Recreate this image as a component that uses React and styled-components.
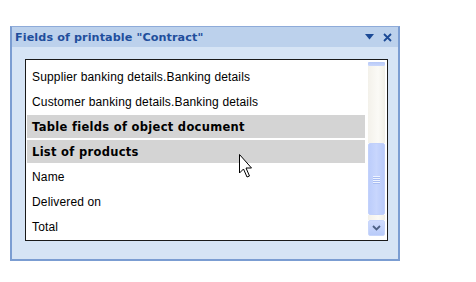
import styled, { createGlobalStyle } from "styled-components";

const GlobalStyle = createGlobalStyle`
  html, body {
    margin: 0;
    padding: 0;
    background: #ffffff;
  }
`;

const Page = styled.div`
  width: 476px;
  height: 282px;
  padding: 26px 0 0 10px;
  box-sizing: border-box;
  position: relative;
`;

const Panel = styled.div`
  width: 390px;
  height: 235px;
  box-sizing: border-box;
  border: 2px solid #7b9dd2;
  border-top: 1px solid #8eabd9;
  background: #d6e4f5;
  display: flex;
  flex-direction: column;
`;

const TitleBar = styled.div`
  height: 21px;
  background: #bcd1ec;
  display: flex;
  align-items: center;
  padding: 0 6px 0 3px;
`;

const Title = styled.div`
  flex: 1;
  font-family: "DejaVu Sans", "Liberation Sans", sans-serif;
  font-weight: bold;
  font-size: 11.2px;
  color: #1f4e9c;
  letter-spacing: 0.1px;
`;

const TitleButtons = styled.div`
  display: flex;
  align-items: center;
  gap: 9px;
`;

const Body = styled.div`
  flex: 1;
  padding: 12px 10px 18px 13px;
  display: flex;
`;

const ListBox = styled.div`
  flex: 1;
  border: 1px solid #1a1a1a;
  background: #ffffff;
  display: flex;
  overflow: hidden;
`;

const Rows = styled.div`
  flex: 1;
  padding: 5px 3px 0 1px;
`;

const Row = styled.div`
  height: 23px;
  margin-bottom: 2px;
  display: flex;
  align-items: center;
  padding: 1px 0 0 5px;
  box-sizing: border-box;
  font-family: ${(p) =>
    p.group ? `"DejaVu Sans", sans-serif` : `"Liberation Sans", Arial, sans-serif`};
  font-size: ${(p) => (p.group ? "11.5px" : "12px")};
  letter-spacing: ${(p) => (p.group ? "0.3px" : "0.15px")};
  font-weight: ${(p) => (p.group ? "bold" : "normal")};
  background: ${(p) => (p.group ? "#d4d4d4" : "transparent")};
  color: #000;
  white-space: nowrap;
`;

const Scroll = styled.div`
  width: 17px;
  margin: 2px 2px 0 0;
  display: flex;
  flex-direction: column;
`;

const TopCap = styled.div`
  height: 4px;
  background: linear-gradient(#b7c9f7, #c9d7fb);
  border-radius: 1px;
`;

const Track = styled.div`
  height: ${(p) => p.h}px;
  background: linear-gradient(90deg, #f3f1ea, #fbfaf6 60%, #f0eee6);
`;

const Thumb = styled.div`
  height: 72px;
  box-sizing: border-box;
  border: 1px solid #c2d1fb;
  border-radius: 2px;
  background: linear-gradient(90deg, #bccdfb, #c8d6fd 50%, #b9cafa);
  display: flex;
  align-items: center;
  justify-content: center;
`;

const Grip = styled.div`
  width: 7px;
  display: flex;
  flex-direction: column;
  gap: 1px;
  & > span {
    height: 1px;
    background: #eef3ff;
    box-shadow: 0 1px 0 #a9bdf2;
  }
`;

const DownButton = styled.div`
  height: 16px;
  box-sizing: border-box;
  border: 1px solid #c8d6fb;
  border-radius: 2px;
  background: linear-gradient(#cfdbfd, #b9cbf9);
  display: flex;
  align-items: center;
  justify-content: center;
`;

const Cursor = styled.svg`
  position: absolute;
  left: 239px;
  top: 154px;
`;

const items = [
  { text: "Supplier banking details.Banking details" },
  { text: "Customer banking details.Banking details" },
  { text: "Table fields of object document", group: true },
  { text: "List of products", group: true },
  { text: "Name" },
  { text: "Delivered on" },
  { text: "Total" },
];

export default function App() {
  return (
    <Page>
      <GlobalStyle />
      <Panel>
        <TitleBar>
          <Title>Fields of printable "Contract"</Title>
          <TitleButtons>
            <svg width="9" height="6" viewBox="0 0 9 6">
              <path d="M0 0 H9 L4.5 5.5 Z" fill="#1c4a96" />
            </svg>
            <svg width="9" height="9" viewBox="0 0 9 9">
              <path d="M1 1 L8 8 M8 1 L1 8" stroke="#1c4a96" strokeWidth="1.8" />
            </svg>
          </TitleButtons>
        </TitleBar>
        <Body>
          <ListBox>
            <Rows>
              {items.map((it) => (
                <Row key={it.text} group={it.group}>
                  {it.text}
                </Row>
              ))}
            </Rows>
            <Scroll>
              <TopCap />
              <Track h={77} />
              <Thumb>
                <Grip>
                  <span />
                  <span />
                  <span />
                  <span />
                </Grip>
              </Thumb>
              <Track h={5} />
              <DownButton>
                <svg width="9" height="6" viewBox="0 0 9 6">
                  <path d="M1 1 L4.5 4.5 L8 1" stroke="#4d6185" strokeWidth="1.8" fill="none" />
                </svg>
              </DownButton>
            </Scroll>
          </ListBox>
        </Body>
      </Panel>
      <Cursor width="14" height="25" viewBox="0 0 14 25">
        <path
          d="M0.5 0.5 L0.5 19 L4.5 15 L8 23 L10.5 22 L7 14 L12.5 14 Z"
          fill="#fff"
          stroke="#000"
          strokeWidth="1"
          strokeLinejoin="miter"
        />
      </Cursor>
    </Page>
  );
}
